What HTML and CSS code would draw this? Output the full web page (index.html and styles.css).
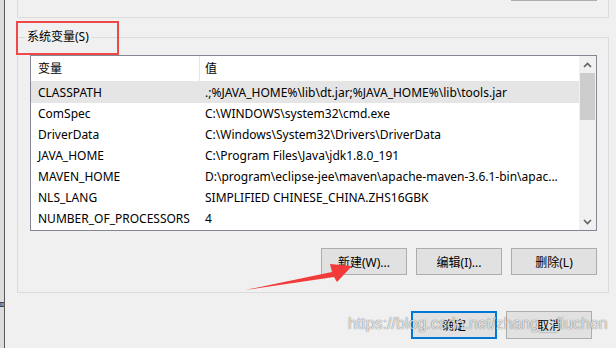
FILE: index.html
```html
<!DOCTYPE html>
<html lang="zh-CN">
<head>
    <meta charset="UTF-8">
    <title>环境变量</title>
    <link rel="stylesheet" href="styles.css">
</head>
<body>
    <div class="screen">
        <div class="side"><span class="side-icon"></span></div>
        <div class="dialog">
            <!-- tail of the user variables group above -->
            <div class="group-prev"><span class="btn-stub"></span></div>

            <fieldset class="group">
                <legend>系统变量(S)</legend>
                <div class="listbox">
                    <div class="list">
                        <div class="row head"><span class="c1">变量</span><span class="c2">值</span></div>
                        <div class="row sel"><span class="c1">CLASSPATH</span><span class="c2">.;%JAVA_HOME%\lib\dt.jar;%JAVA_HOME%\lib\tools.jar</span></div>
                        <div class="row"><span class="c1">ComSpec</span><span class="c2">C:\WINDOWS\system32\cmd.exe</span></div>
                        <div class="row"><span class="c1">DriverData</span><span class="c2">C:\Windows\System32\Drivers\DriverData</span></div>
                        <div class="row"><span class="c1">JAVA_HOME</span><span class="c2">C:\Program Files\Java\jdk1.8.0_191</span></div>
                        <div class="row"><span class="c1">MAVEN_HOME</span><span class="c2">D:\program\eclipse-jee\maven\apache-maven-3.6.1-bin\apac...</span></div>
                        <div class="row"><span class="c1">NLS_LANG</span><span class="c2">SIMPLIFIED CHINESE_CHINA.ZHS16GBK</span></div>
                        <div class="row"><span class="c1">NUMBER_OF_PROCESSORS</span><span class="c2">4</span></div>
                    </div>
                    <div class="scrollbar">
                        <div class="sb-btn">
                            <svg width="9" height="6" viewBox="0 0 9 6"><polyline points="1,5 4.5,1.5 8,5" fill="none" stroke="#606060" stroke-width="1.6"/></svg>
                        </div>
                        <div class="thumb"></div>
                        <div class="track"></div>
                        <div class="sb-btn">
                            <svg width="9" height="6" viewBox="0 0 9 6"><polyline points="1,1 4.5,4.5 8,1" fill="none" stroke="#606060" stroke-width="1.6"/></svg>
                        </div>
                    </div>
                </div>
                <div class="actions">
                    <button class="btn">新建(W)...</button>
                    <button class="btn">编辑(I)...</button>
                    <button class="btn">删除(L)</button>
                </div>
            </fieldset>

            <div class="footer">
                <button class="btn primary">确定</button>
                <button class="btn">取消</button>
            </div>
        </div>

        <!-- annotations drawn over the screenshot -->
        <div class="mark-box"></div>
        <svg class="arrow" width="616" height="348" viewBox="0 0 616 348">
            <polygon points="245,290 332,272 330,264 352,266 337,282 334,277" fill="#f23a3a"/>
        </svg>
        <div class="watermark">https://blog.csdn.net/zhang__liuchen</div>
    </div>
</body>
</html>
```

FILE: styles.css
```css
body {
    margin: 0;
    font-family: "Noto Sans", "Noto Sans CJK SC", sans-serif;
    font-size: 12px;
    color: #000;
    background: #f0f0f0;
}
.screen {
    position: relative;
    display: flex;
    width: 616px;
    height: 348px;
    overflow: hidden;
}
.side {
    width: 4px;
    background: #dcdcdc;
    border-right: 1px solid #5a5a5a;
}
.side-icon {
    position: absolute;
    left: 0;
    top: 302px;
    width: 4px;
    height: 3px;
    border-top: 1px solid #444;
    border-bottom: 1px solid #444;
    background: linear-gradient(90deg, #3b7ddd, #e08a2a);
}
.dialog {
    flex: 1;
    padding: 0 7px 0 12px;
}
.group-prev {
    height: 17px;
    border: 1px solid #dcdcdc;
    border-top: none;
    display: flex;
    justify-content: flex-end;
    padding-right: 11px;
}
.btn-stub {
    width: 86px;
    height: 0;
    border-bottom: 1px solid #adadad;
}
.group {
    margin: 11px 0 0;
    padding: 0 11px 17px 12px;
    border: 1px solid #dcdcdc;
    min-width: 0;
}
.group legend {
    padding: 0 2px;
    margin-left: -5px;
    line-height: 16px;
}
.listbox {
    display: flex;
    height: 176px;
    margin-top: 10px;
    box-sizing: border-box;
    border: 1px solid #828790;
    background: #fff;
}
.list {
    flex: 1;
    overflow: hidden;
}
.row {
    display: grid;
    grid-template-columns: 169px 1fr;
    height: 21px;
    line-height: 21px;
    white-space: nowrap;
}
.row.head {
    height: 25px;
    line-height: 25px;
    border-bottom: 1px solid #e5e5e5;
}
.row.head .c1 {
    border-right: 1px solid #e5e5e5;
}
.row.sel {
    background: #e5e5e5;
}
.c1 {
    padding-left: 7px;
}
.c2 {
    padding-left: 5px;
    overflow: hidden;
}
.scrollbar {
    width: 17px;
    display: flex;
    flex-direction: column;
    background: #f0f0f0;
}
.sb-btn {
    height: 17px;
    display: flex;
    align-items: center;
    justify-content: center;
}
.thumb {
    height: 47px;
    margin: 0 1px;
    background: #cdcdcd;
}
.track {
    flex: 1;
}
.actions {
    display: flex;
    justify-content: flex-end;
    gap: 9px;
    margin-top: 17px;
}
.btn {
    width: 86px;
    height: 27px;
    box-sizing: border-box;
    border: 1px solid #adadad;
    background: #e1e1e1;
    font: inherit;
    color: #000;
    padding: 0;
}
.footer {
    display: flex;
    justify-content: flex-end;
    gap: 9px;
    margin-top: 18px;
    padding-right: 17px;
}
.footer .btn {
    height: 28px;
}
.btn.primary {
    border: 2px solid #0078d7;
}
.mark-box {
    position: absolute;
    left: 16px;
    top: 21px;
    width: 103px;
    height: 34px;
    box-sizing: border-box;
    border: 2px solid #f04848;
}
.arrow {
    position: absolute;
    left: 0;
    top: 0;
    pointer-events: none;
}
.watermark {
    position: absolute;
    left: 348px;
    top: 315px;
    font-family: "Liberation Sans", sans-serif;
    font-size: 16px;
    color: rgba(255, 255, 255, 0.8);
    text-shadow: 0 0 1px rgba(0, 0, 0, 0.45), 0 0 1px rgba(0, 0, 0, 0.3);
    white-space: nowrap;
}
```
